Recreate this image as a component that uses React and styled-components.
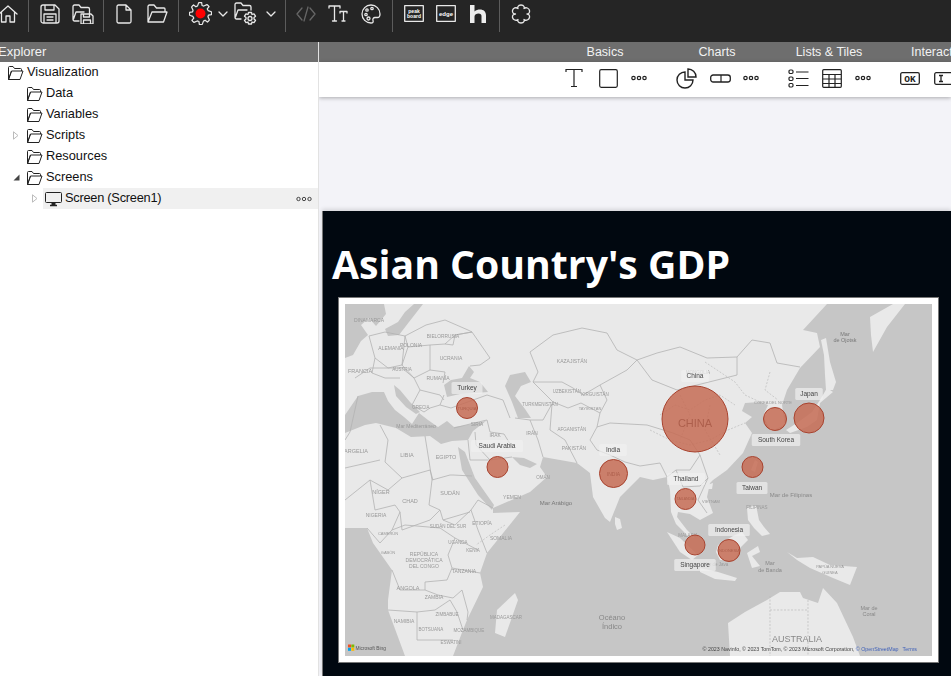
import React from "react";
import styled, { createGlobalStyle } from "styled-components";

const Global = createGlobalStyle`
  html, body { margin: 0; padding: 0; height: 100%; overflow: hidden; background: #fff; }
  body { font-family: "Liberation Sans", Arial, sans-serif; }
  #root { height: 100%; }
`;

const Page = styled.div`
  width: 951px; height: 676px; overflow: hidden; display: flex; flex-direction: column;
`;
const Toolbar = styled.header`
  height: 42px; flex: none; background: #252525; display: flex; align-items: flex-start; margin-left: -8px;
`;
const Tool = styled.div`
  width: ${p => p.$w || 32}px; height: 27px; flex: none; display: flex; align-items: center; justify-content: center;
  svg { display: block; fill: none; stroke: ${p => p.$dim ? "#666" : "#e8e8e8"}; stroke-width: 1.3; stroke-linejoin: round; stroke-linecap: round; }
`;
const Sep = styled.div`
  width: 1px; height: 32px; background: #5c5c5c; margin: 0 4px; flex: none;
`;
const Body = styled.div`
  flex: 1; display: flex; min-height: 0;
`;
const Sidebar = styled.aside`
  width: 318px; flex: none; border-right: 1px solid #e2e2e2; background: #fff; display: flex; flex-direction: column;
`;
const SideHeader = styled.div`
  height: 20px; background: #6e6e6e; color: #f2f2f2; font-size: 13px; line-height: 20px; overflow: visible; text-indent: -2px;
`;
const Tree = styled.ul`
  list-style: none; margin: 0; padding: 0;
`;
const Row = styled.li`
  height: 21px; display: flex; align-items: center; font-size: 12.8px; color: #111; padding-left: ${p => p.$indent}px;
`;
const Arrow = styled.span`
  width: 12px; margin-left: -16px; margin-right: 4px; display: flex; justify-content: center; flex: none;
  svg { display: block; }
`;
const ScreenArrow = styled(Arrow)`
  margin-left: -14px; margin-right: 2px;
`;
const Label = styled.span`
  margin-left: 3px; padding-bottom: 2px; white-space: nowrap; letter-spacing: ${p => p.$tight ? "-0.25px" : "0"};
`;
const Selected = styled.div`
  flex: 1; height: 21px; background: #f0f0f0; display: flex; align-items: center; padding: 0 6px 0 2px;
`;
const More = styled.svg`
  display: block; fill: none; stroke: #333; stroke-width: .9; margin-left: ${p => p.$auto ? "auto" : "0"};
`;
const Main = styled.main`
  flex: 1; min-width: 0; display: flex; flex-direction: column; background: #f3f3f8; overflow: hidden;
`;
const SectionHead = styled.div`
  height: 20px; background: #6e6e6e; display: flex; padding-left: 230px; flex: none;
`;
const SectionName = styled.div`
  width: 112px; flex: none; text-align: center; color: #f2f2f2; font-size: 12.5px; line-height: 20px; white-space: nowrap;
`;
const LastSection = styled(SectionName)`
  text-align: left; padding-left: 26px; box-sizing: border-box;
`;
const Palette = styled.div`
  height: 35px; background: #fff; display: flex; padding-left: 230px; flex: none; box-shadow: 0 1px 4px rgba(0,0,0,.3); position: relative;
`;
const PaletteGroup = styled.div`
  width: 112px; flex: none; display: flex; padding-left: 8px; box-sizing: border-box; align-items: center; height: 32px;
`;
const PaletteItem = styled.div`
  width: ${p => p.$w || 34}px; flex: none; display: flex; justify-content: center;
  svg { display: block; fill: none; stroke: #222; stroke-width: 1.2; }
`;
const Canvas = styled.div`
  flex: 1; padding: 114px 0 0 3px; min-height: 0;
`;
const Screen = styled.section`
  height: 100%; background: #010810; border-left: 1px solid #777; box-shadow: 0 -2px 4px rgba(0,0,0,.12); padding: 0 0 0 16px;
`;
const Title = styled.h1`
  margin: 0 0 0 -7px; height: 87px; padding-top: 30px; box-sizing: border-box; color: #fff;
  font-family: "Open Sans", sans-serif; font-weight: 700; font-size: 39.200px; line-height: 46px; white-space: nowrap;
`;
const MapCard = styled.div`
  width: 599px; height: 364px; box-sizing: border-box; border: 6px solid #fff; outline: 1px solid #777; background: #c6c6c6;
`;
const MapSvg = styled.svg`
  display: block; filter: blur(0.45px);
`;

const gearPath = (() => {
  const pts = [];
  for (let i = 0; i < 8; i++) {
    const a = (i / 8) * Math.PI * 2 - Math.PI / 2;
    [[-0.2, 11.5], [-0.0, 11.5], [0.13, 11.5], [0.24, 8.5], [0.52, 8.5]].forEach(([d, r]) => {
      pts.push(`${(12 + r * Math.cos(a + d * 0.8)).toFixed(2)} ${(12 + r * Math.sin(a + d * 0.8)).toFixed(2)}`);
    });
  }
  return `M${pts.join("L")}Z`;
})();

const Home = () => <svg width="20" height="20" viewBox="0 0 20 20"><path d="M1 10 10 2l9 8M3.500 8.500V18h4.500v-6h4v6h4.500V8.500" /></svg>;
const Save = () => <svg width="20" height="20" viewBox="0 0 20 20"><path d="M1 3a2 2 0 0 1 2-2h12l4 4v12a2 2 0 0 1-2 2H3a2 2 0 0 1-2-2zM5 1v5h9V1M4 19v-9h12v9M7 13h6M7 16h6" /></svg>;
const SaveAs = () => <svg width="22" height="20" viewBox="0 0 22 20"><path d="M7 17H2.500A1.500 1.500 0 0 1 1 15.500V2.500A1.500 1.500 0 0 1 2.500 1H7l2 2.500h7A1.500 1.500 0 0 1 17.500 5v4M1.500 15l2.500-7h8M9 10h10l2 2v8H9zM11.500 10v3h6v-3M11.500 20v-4h7v4" /></svg>;
const NewDoc = () => <svg width="16" height="20" viewBox="0 0 16 20"><path d="M1 2.500A1.500 1.500 0 0 1 2.500 1H10l5 5v11.500a1.500 1.500 0 0 1-1.500 1.500h-11A1.500 1.500 0 0 1 1 17.500zM10 1v5h5" /></svg>;
const Open = () => <svg width="21" height="20" viewBox="0 0 21 20"><path d="M1 18V2.500A1.500 1.500 0 0 1 2.500 1H7l2.500 3H17a1 1 0 0 1 1 1v3M1 18h15.500L20 8H5zM1 18l4-10" /></svg>;
const RedGear = () => <svg width="23" height="23" viewBox="0 0 24 24"><path d={gearPath} /><circle cx="12" cy="12" r="5.200" fill="#f00" stroke="none" /></svg>;
const Chevron = () => <svg width="10" height="6" viewBox="0 0 10 6"><path d="M1 1l4 4 4-4" /></svg>;
const FolderGear = () => <svg width="23" height="24" viewBox="0 0 23 24"><path d="M7 17H2.500A1.500 1.500 0 0 1 1 15.500V2.500A1.500 1.500 0 0 1 2.500 1H7l2 2.500h6.500A1.500 1.500 0 0 1 17 5v3M1.500 15l2.500-7h9" /><circle cx="16" cy="16.500" r="2" /><path d="M14.500 10.500h3l.5 2 2-.7 1.500 2.400-1.500 1.300v1.500l1.500 1.300-1.500 2.400-2-.7-.5 2h-3l-.5-2-2 .7-1.500-2.400 1.500-1.300V15.500L10.500 14.200 12 11.800l2 .7z" /></svg>;
const Code = () => <svg width="20" height="16" viewBox="0 0 20 16"><path d="M6 2 1 8l5 6M14 2l5 6-5 6M12 1 8 15" /></svg>;
const TextSize = () => <svg width="20" height="17" viewBox="0 0 20 17"><path d="M1 3V1h11v2M6.500 1v15M4.500 16h4M12 8V6.500h7V8M15.500 6.500V16M14 16h3" /></svg>;
const PaletteIcon = () => <svg width="20" height="20" viewBox="0 0 20 20"><path d="M10 1a9 9 0 0 0 0 18c2 0 2.500-1 2-2.500-.6-1.800.5-3 2-3h2.500c1.500 0 2.500-1.500 2.500-3.500C19 5 15 1 10 1z" /><circle cx="6" cy="6" r="1.200" /><circle cx="11" cy="4.500" r="1.200" /><circle cx="5" cy="10.500" r="1.200" /><circle cx="7.500" cy="14.500" r="1.500" /></svg>;
const Puzzle = () => <svg width="20" height="20" viewBox="0 0 20 20"><path d="M7 2.500C8 .5 12 .5 13 2.500c.6 1.200 0 2 0 2 2-1.500 5-.5 5.500 2s-1 3.500-2.500 3.500c1.500 0 3 1 2.500 3.500s-3.500 3.500-5.500 2c0 0 .5 1 0 2-1 2-5 2-6 0-.5-1 0-2 0-2-2 1.500-5 .5-5.500-2S3 10 4.500 10C3 10 1 9 1.500 6.500S5 2.900 7 4.500c0 0-.6-.8 0-2z" /></svg>;
const LogoBox = styled.svg`
  text { fill: #fff; stroke: none; font-family: "Liberation Sans", sans-serif; font-weight: 700; }
`;
const Peak = () => <LogoBox width="20" height="17" viewBox="0 0 20 17"><rect x=".7" y=".7" width="18.600" height="15.600" /><text x="10" y="7.500" fontSize="5" textAnchor="middle">peak</text><text x="10" y="12.500" fontSize="5" textAnchor="middle">board</text></LogoBox>;
const Edge = () => <LogoBox width="20" height="17" viewBox="0 0 20 17"><rect x=".7" y=".7" width="18.600" height="15.600" /><text x="10" y="11" fontSize="6" textAnchor="middle">edge</text></LogoBox>;
const HLogo = () => <svg width="16" height="18" viewBox="0 0 16 18"><path fill="#eee" stroke="none" d="M0 0h4.500v6.500C6 5 8 4.500 10 4.500c3.500 0 6 2 6 6V18h-4.500v-7c0-1.500-1-2.500-3-2.500s-4 1-4 3V18H0z" /></svg>;

const FolderIcon = () => <svg width="17" height="16" viewBox="0 0 17 16" fill="none" stroke="#222" strokeWidth="1"><path d="M1.500 14.500V2.500a1 1 0 0 1 1-1H6l1.500 2h6a1 1 0 0 1 1 1V6M1.500 14.500H13L16 6H4.500zM1.500 14.500 4.500 6" /></svg>;
const Monitor = () => <svg width="17" height="16" viewBox="0 0 17 16" fill="none" stroke="#222" strokeWidth="1"><rect x=".5" y="1.500" width="16" height="10" rx="1" /><path d="M5 14.500h7" strokeWidth="1.500" /><path d="M7 12h3v2H7z" fill="#222" /></svg>;
const Dots = ({ auto }) => <More width="16" height="6" viewBox="0 0 16 6" $auto={auto}><circle cx="2.500" cy="3" r="1.700" /><circle cx="8" cy="3" r="1.700" /><circle cx="13.500" cy="3" r="1.700" /></More>;
const HollowArrow = () => <svg width="6" height="9" viewBox="0 0 6 9"><path d="M.5.800 5 4.500.5 8.200z" fill="#fff" stroke="#bbb" /></svg>;
const SolidArrow = () => <svg width="7" height="7" viewBox="0 0 7 7"><path d="M6.500.5v6H.5z" fill="#444" /></svg>;

const PText = () => <svg width="18" height="20" viewBox="0 0 18 20"><path d="M1 4V1.500h16V4M9 1.500V18.500M6 18.500h6" /></svg>;
const PRect = () => <svg width="19" height="19" viewBox="0 0 19 19"><rect x=".7" y=".7" width="17.600" height="17.600" rx="1.500" /></svg>;
const PPie = () => <svg width="21" height="21" viewBox="0 0 21 21"><path d="M9 4a8 8 0 1 0 8 8H9zM12 1v8h8a8 8 0 0 0-8-8z" strokeWidth="1.400" /></svg>;
const PSlider = () => <svg width="21" height="9" viewBox="0 0 21 9"><rect x=".7" y="1" width="19.600" height="7" rx="2.500" strokeWidth="1.300" /><path d="M11 1v7" /></svg>;
const PList = () => <svg width="21" height="19" viewBox="0 0 21 19"><rect x="1" y="1" width="4" height="3.500" rx="1.200" /><rect x="1" y="8" width="4" height="3.500" rx="1.200" /><rect x="1" y="14.500" width="4" height="3.500" rx="1.200" /><path d="M8 3h12.500M8 9.500h12.500M8 16.500h12.500" /></svg>;
const PTable = () => <svg width="20" height="19" viewBox="0 0 20 19"><rect x=".7" y=".7" width="18.600" height="17.600" rx="1" /><path d="M1 5.500h18M1 10h18M1 14.500h18M7 5.500v13M13 5.500v13" /></svg>;
const POk = () => <svg width="20" height="13" viewBox="0 0 20 13"><rect x=".7" y=".7" width="18.600" height="11.600" rx="1.500" strokeWidth="1.300" /><text x="10" y="9.700" fontSize="9.500" fontWeight="700" textAnchor="middle" fill="#222" stroke="none" fontFamily="Liberation Mono, monospace">OK</text></svg>;
const PInput = () => <svg width="20" height="13" viewBox="0 0 20 13"><rect x=".7" y=".7" width="18.600" height="11.600" rx="1.500" strokeWidth="1.300" /><path d="M5 3.500h4M5 9.500h4M7 3.500v6" strokeWidth="1.300" /></svg>;

const water = [
  "M345 304H384L386 314 376 326 369 318 361 325 368 335 361 341 353 355 345 358Z",
  "M414 304H423L409 322 399 335 388 336 385 329 398 322 405 312Z",
  "M345 415 358 396 372 392 384 392 388 401 395 410 404 417 412 424 419 413 428 420 438 427 447 421 454 427 467 425 486 421 473 431 468 440 452 441 441 444 430 436 411 437 396 428 376 423 365 425 345 433Z",
  "M394 385 400 390 410 402 420 412 416 414 406 407 396 396Z",
  "M444 385 451 380 462 378 469 366 474 372 470 378 480 382 488 392 475 393 460 394 447 397Z",
  "M510 375 525 372 531 382 521 386 515 396 525 409 531 418 518 418 512 402 505 386Z",
  "M458 447 465 452 475 478 494 505 492 510 478 495 462 470Z",
  "M512 457 524 458 537 464 530 468 520 465Z"
];
const land = [
  "M345 304H827L803 330 817 333 820 347 800 368 787 390 782 405 785 425 771 431 763 416 768 405 760 402 745 403 742 411 752 417 745 423 752 433 743 453 727 470 713 480 710 483 707 497 713 513 700 520 690 514 678 512 677 517 687 530 695 538 688 536 676 524 671 512 670 490 667 477 653 480 640 477 620 497 610 522 605 518 593 497 590 473 577 463 543 457 540 467 547 477 530 492 493 508 493 513 520 512 487 553 480 573 483 587 467 620 463 630 453 656H405L388 610 388 600 392 570 373 543 367 528 345 528Z",
  "M870 317 893 304H905L887 327 873 352 871 335Z",
  "M821 340 826 338 830 362 836 382 833 390 826 390 825 375 824 355Z",
  "M827 388 833 392 820 403 817 420 807 427 790 433 786 430 797 423 812 412 820 400Z",
  "M667 532 680 538 698 555 692 560 680 552Z",
  "M700 568 718 572 737 578 735 581 715 579 700 572Z",
  "M718 545 733 536 742 532 748 540 740 548 735 560 720 560 716 552Z",
  "M747 553 758 546 760 552 752 556 760 566 752 568Z",
  "M747 508 756 505 759 520 764 527 770 534 762 536 754 528 748 520Z",
  "M787 552 797 558 813 557 830 565 857 567 850 585 833 578 810 568 797 560Z",
  "M728 623 745 612 767 600 780 592 800 592 803 598 818 603 823 588 837 603 853 637 860 656H730Z",
  "M515 593 518 600 505 637 495 633 497 610Z",
  "M615 517 620 519 622 528 617 530 615 524Z",
  "M755 460 758 462 755 472 751 470Z",
  "M707 485 713 483 712 489 707 489Z"
];
const borders = [
  "M530 352 553 335 582 328 607 333 617 350 637 360 657 353 680 347 707 358 737 357 752 340 770 343 777 363 800 367",
  "M637 360 652 380 677 390 717 380 737 375 737 357",
  "M637 360 627 370 600 385 607 400 600 413 597 427 610 423 647 425 673 433 690 440 700 455 708 478",
  "M597 427 590 440 597 450 610 455 625 462 640 466 660 463 667 477",
  "M667 477 676 470 690 470 700 455",
  "M676 470 683 487 700 486 708 478 698 500 707 513",
  "M530 352 538 372 533 382 562 382 573 388 583 395 600 385",
  "M533 382 553 402 568 408 581 403 600 413",
  "M553 402 543 420 530 420 515 418",
  "M552 404 550 430 565 440 577 463",
  "M530 420 538 440 543 457",
  "M445 344 455 335 472 332 490 358 480 365 470 366",
  "M405 336 426 325 445 320 468 330 472 332 455 335 453 345 445 344 430 345 408 347 405 336",
  "M408 347 402 365 414 378 430 370 445 372 443 383",
  "M430 345 430 370",
  "M369 336 385 332 405 336 402 365 388 368 375 358 369 336",
  "M355 378 370 368 388 368 402 368 414 378 420 390 440 395 444 400",
  "M375 358 372 373 385 378 400 378",
  "M420 390 412 405 424 412 430 408 440 405 444 395",
  "M440 405 451 408 487 395 503 400 510 418",
  "M454 428 470 424 487 420 490 432 504 434 512 447",
  "M475 432 476 445 490 460 512 457",
  "M468 440 470 460 490 460",
  "M358 396 350 432 345 440",
  "M380 425 388 440 385 462 402 478 430 470 433 480",
  "M425 436 432 480 450 475 453 475 472 476",
  "M432 480 429 505 440 510 443 520 470 512",
  "M345 500 370 480 388 490 402 478",
  "M370 480 375 510 395 505 400 512 402 530 430 520 440 510",
  "M345 468 380 460",
  "M367 528 380 543 392 530 400 512",
  "M392 530 405 525 440 528 455 538 478 550",
  "M443 520 455 525 471 510 478 500 493 508",
  "M471 510 478 530 487 553",
  "M455 538 448 555 452 568 480 573",
  "M392 570 400 590 425 590 425 582 447 580 452 568",
  "M388 610 417 612 417 640 453 640",
  "M417 612 435 610 450 600 457 612 463 630",
  "M425 590 438 595 453 598 462 590 468 612 467 620"
];
const dashed = [
  "M705 362 720 372 735 382 745 395 760 402",
  "M660 415 675 405 690 410 705 400 720 395 735 405",
  "M650 430 670 440 690 445 710 440 728 430 745 423",
  "M680 395 690 415 680 440",
  "M710 405 705 430 720 455",
  "M770 372 765 390 778 400",
  "M505 525 490 535 476 545",
  "M770 596 770 656",
  "M808 600 808 656",
  "M770 610 808 610"
];
const mapLabels = [
  [369, 322, "DINAMARCA", 5], [391, 350, "ALEMANIA", 5], [411, 347, "POLONIA", 5], [360, 373, "FRANCIA", 5.500], [402, 371, "AUSTRIA", 4.500],
  [443, 338, "BIELORRUSIA", 4.800], [451, 360, "UCRANIA", 5], [438, 380, "RUMANÍA", 5], [421, 409, "GRECIA", 4.500],
  [416, 428, "Mar Mediterráneo", 5], [572, 363, "KAZAJISTÁN", 5], [477, 426, "SIRIA", 4.800], [495, 437, "IRAK", 4.800], [532, 435, "IRÁN", 4.800],
  [567, 393, "UZBEKISTÁN", 4.500], [540, 406, "TURKMENISTÁN", 4.500], [595, 396, "KIRGUISTÁN", 4.500], [590, 410, "TAYIKISTÁN", 4], [572, 431, "AFGANISTÁN", 4.500], [574, 450, "PAKISTÁN", 5],
  [356, 453, "ARGELIA", 5.500], [407, 457, "LIBIA", 5.500], [446, 459, "EGIPTO", 5.500], [381, 494, "NÍGER", 5.500], [410, 503, "CHAD", 5.500], [450, 495, "SUDÁN", 5.500],
  [376, 517, "NIGERIA", 5], [448, 528, "SUDÁN DEL SUR", 4.500], [482, 525, "ETIOPÍA", 5], [501, 540, "SOMALIA", 5], [388, 535, "CAMERÚN", 4], [388, 554, "GABÓN", 4],
  [424, 556, "REPÚBLICA", 5], [424, 562, "DEMOCRÁTICA", 5], [424, 568, "DEL CONGO", 5], [458, 544, "UGANDA", 4.500], [473, 552, "KENIA", 4.500], [464, 573, "TANZANIA", 5],
  [408, 590, "ANGOLA", 5.500], [434, 599, "ZAMBIA", 5], [447, 616, "ZIMBABUE", 4.500], [404, 623, "NAMIBIA", 5], [431, 631, "BOTSUANA", 4.500], [469, 632, "MOZAMBIQUE", 4.500], [451, 644, "ESWATINI", 4.500],
  [506, 619, "MADAGASCAR", 4.500], [556, 505, "Mar Arábigo", 6, "#777"], [512, 499, "YEMEN", 5], [543, 479, "OMÁN", 4.500], [612, 620, "Océano", 7.500, "#888"], [612, 629, "Índico", 7.500, "#888"],
  [845, 336, "Mar", 5.500, "#777"], [845, 342, "de Ojotsk", 5.500, "#777"], [791, 497, "Mar de Filipinas", 6, "#888"], [770, 565, "Mar", 5.500, "#888"], [770, 572, "de Banda", 5.500, "#888"],
  [830, 568, "PAPÚA NUEVA", 4], [830, 574, "GUINEA", 4], [869, 610, "Mar de", 5.500, "#888"], [869, 616, "Coral", 5.500, "#888"], [797, 642, "AUSTRALIA", 9, "#888"], [757, 509, "FILIPINAS", 4.500],
  [698, 374, "MONGOLIA", 4.500], [773, 404, "COREA DEL NORTE", 4], [716, 566, "Mar de Java", 4.500], [688, 537, "MALASIA", 4.500], [711, 503, "VIETNAM", 4]
];
const bubbles = [
  { x: 695, y: 419, r: 33, name: "China", lx: 695, ly: 376, inner: "CHINA", fs: 11 },
  { x: 809, y: 418, r: 15, name: "Japan", lx: 809, ly: 394, inner: "", fs: 5 },
  { x: 775, y: 419, r: 11.500, name: "South Korea", lx: 776, ly: 440, inner: "", fs: 5 },
  { x: 752.500, y: 467, r: 10.500, name: "Taiwan", lx: 752, ly: 488, inner: "", fs: 5 },
  { x: 685.500, y: 499, r: 10.500, name: "Thailand", lx: 686, ly: 479, inner: "TAILANDIA", fs: 3.500 },
  { x: 695, y: 545, r: 10, name: "Singapore", lx: 695, ly: 565, inner: "", fs: 5 },
  { x: 729, y: 550.500, r: 11, name: "Indonesia", lx: 729, ly: 530, inner: "INDONESIA", fs: 4 },
  { x: 613.500, y: 473.500, r: 14, name: "India", lx: 613, ly: 450, inner: "INDIA", fs: 5 },
  { x: 497.500, y: 467, r: 10.500, name: "Saudi Arabia", lx: 497, ly: 446, inner: "", fs: 5 },
  { x: 467, y: 408, r: 10.500, name: "Turkey", lx: 467, ly: 388, inner: "TURQUÍA", fs: 4.200 }
];

const MapChart = () => (
  <MapSvg width="587" height="352" viewBox="345 304 587 352" fontFamily="Liberation Sans, sans-serif">
    <rect x="345" y="304" width="587" height="352" fill="#c6c6c6" />
    {land.map((d, i) => <path key={i} d={d} fill="#e9e9e9" />)}
    {water.map((d, i) => <path key={i} d={d} fill="#c6c6c6" />)}
    <g fill="none" stroke="#b2b2b2" strokeWidth=".8">
      {borders.map((d, i) => <path key={i} d={d} />)}
    </g>
    <g fill="none" stroke="#bcbcbc" strokeWidth=".7" strokeDasharray="2 1.500">
      {dashed.map((d, i) => <path key={i} d={d} />)}
    </g>
    {mapLabels.map((l, i) => (
      <text key={i} x={l[0]} y={l[1]} fontSize={l[3]} fill={l[4] || "#999"} textAnchor="middle">{l[2]}</text>
    ))}
    {bubbles.map(b => {
      const w = b.name.length * 3.500 + 10;
      return (
        <g key={b.name}>
          <circle cx={b.x} cy={b.y} r={b.r} fill="#c66c55" fillOpacity=".85" stroke="#a8432f" strokeWidth="1" />
          {b.inner && <text x={b.x} y={b.y + b.fs / 2.500 + (b.fs > 8 ? 4 : 0)} fontSize={b.fs} fill="#ad5f4c" textAnchor="middle">{b.inner}</text>}
          <rect x={b.lx - w / 2} y={b.ly - 6} width={w} height="12" rx="1.500" fill="#f0f0f0" fillOpacity=".7" />
          <text x={b.lx} y={b.ly + 2.300} fontSize="6.500" fill="#444" textAnchor="middle">{b.name}</text>
        </g>
      );
    })}
    <g>
      <rect x="348" y="644.500" width="3" height="3" fill="#f25022" />
      <rect x="351.300" y="644.500" width="3" height="3" fill="#7fba00" />
      <rect x="348" y="647.800" width="3" height="3" fill="#00a4ef" />
      <rect x="351.300" y="647.800" width="3" height="3" fill="#ffb900" />
      <text x="355.500" y="649.500" fontSize="4.800" fill="#555">Microsoft Bing</text>
    </g>
    <text x="917" y="650.500" fontSize="5.300" fill="#444" textAnchor="end">
      © 2023 Navinfo, © 2023 TomTom, © 2023 Microsoft Corporation, <tspan fill="#3d5fb8">© OpenStreetMap</tspan><tspan fill="#3d5fb8" dx="4">Terms</tspan>
    </text>
  </MapSvg>
);

export default function App() {
  return (
    <Page>
      <Global />
      <Toolbar>
        <Tool><Home /></Tool><Sep />
        <Tool $w={33}><Save /></Tool><Tool $w={33}><SaveAs /></Tool><Sep />
        <Tool><NewDoc /></Tool><Tool $w={34}><Open /></Tool><Sep />
        <Tool $w={34}><RedGear /></Tool><Tool $w={12}><Chevron /></Tool>
        <Tool><FolderGear /></Tool><Tool $w={20}><Chevron /></Tool><Sep />
        <Tool $dim><Code /></Tool><Tool><TextSize /></Tool><Tool $w={34}><PaletteIcon /></Tool><Sep />
        <Tool $w={34}><Peak /></Tool><Tool $w={30}><Edge /></Tool><Tool $w={34}><HLogo /></Tool><Sep />
        <Tool $w={34}><Puzzle /></Tool>
      </Toolbar>
      <Body>
        <Sidebar>
          <SideHeader>Explorer</SideHeader>
          <Tree>
            <Row $indent={7}><FolderIcon /><Label>Visualization</Label></Row>
            <Row $indent={26}><FolderIcon /><Label>Data</Label></Row>
            <Row $indent={26}><FolderIcon /><Label>Variables</Label></Row>
            <Row $indent={26}><Arrow><HollowArrow /></Arrow><FolderIcon /><Label>Scripts</Label></Row>
            <Row $indent={26}><FolderIcon /><Label>Resources</Label></Row>
            <Row $indent={26}><Arrow><SolidArrow /></Arrow><FolderIcon /><Label>Screens</Label></Row>
            <Row $indent={43}>
              <ScreenArrow><HollowArrow /></ScreenArrow>
              <Selected><Monitor /><Label $tight>Screen (Screen1)</Label><Dots auto /></Selected>
            </Row>
          </Tree>
        </Sidebar>
        <Main>
          <SectionHead>
            <SectionName>Basics</SectionName>
            <SectionName>Charts</SectionName>
            <SectionName>Lists &amp; Tiles</SectionName>
            <LastSection>Interactions</LastSection>
          </SectionHead>
          <Palette>
            <PaletteGroup>
              <PaletteItem><PText /></PaletteItem><PaletteItem><PRect /></PaletteItem><PaletteItem $w={28}><Dots /></PaletteItem>
            </PaletteGroup>
            <PaletteGroup>
              <PaletteItem><PPie /></PaletteItem><PaletteItem><PSlider /></PaletteItem><PaletteItem $w={28}><Dots /></PaletteItem>
            </PaletteGroup>
            <PaletteGroup>
              <PaletteItem><PList /></PaletteItem><PaletteItem><PTable /></PaletteItem><PaletteItem $w={28}><Dots /></PaletteItem>
            </PaletteGroup>
            <PaletteGroup>
              <PaletteItem><POk /></PaletteItem><PaletteItem><PInput /></PaletteItem>
            </PaletteGroup>
          </Palette>
          <Canvas>
            <Screen>
              <Title>Asian Country's GDP</Title>
              <MapCard><MapChart /></MapCard>
            </Screen>
          </Canvas>
        </Main>
      </Body>
    </Page>
  );
}
